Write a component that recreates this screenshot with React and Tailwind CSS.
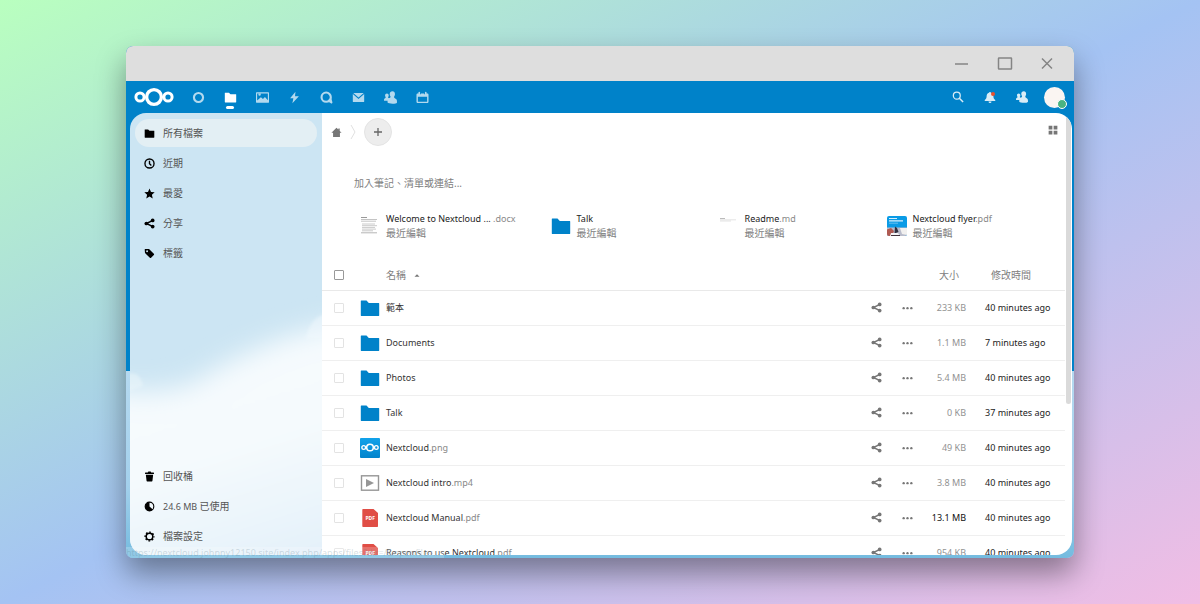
import React from "react";

const LogoIcon = ({ className }) => (
    <svg viewBox="0 0 40 20" className={className} fill="none" stroke="currentColor">
        <circle cx="20" cy="10" r="7.4" strokeWidth="3.4" />
        <circle cx="6" cy="10" r="4.1" strokeWidth="3" />
        <circle cx="34" cy="10" r="4.1" strokeWidth="3" />
    </svg>
);

// 16x16 glyphs, all painted with currentColor
const glyphs = {
    ring: <circle cx="8" cy="8" r="5.6" fill="none" stroke="currentColor" strokeWidth="2.6" />,
    folder: <path d="M1.5 2c-.3 0-.5.2-.5.5v11c0 .3.2.5.5.5h13c.3 0 .5-.2.5-.5v-9c0-.3-.2-.5-.5-.5H8L6 2z" />,
    image: (
        <path
            fillRule="evenodd"
            d="M.6 1.5a.6.6 0 0 0-.6.6v11.8c0 .3.3.6.6.6h14.8c.3 0 .6-.3.6-.6V2.1a.6.6 0 0 0-.6-.6zM1.4 3h13.2v8.4L11 7.4 8.6 9.8 6 7.6l-4.6 4zm3-.1a1.5 1.5 0 1 0 0 3 1.5 1.5 0 0 0 0-3z"
        />
    ),
    bolt: <path d="M9.2.8 2.6 9h4L5.4 15.2 13.4 6.6H8.6z" />,
    talk: (
        <g fill="none" stroke="currentColor" strokeWidth="2.6">
            <circle cx="7.6" cy="7.6" r="5.7" />
            <path d="M10 11.6 14 14 12.6 9.4" strokeLinejoin="round" />
        </g>
    ),
    mail: <path d="M1.6 2.4 8 8l6.4-5.6zM1 3.6v9.2c0 .5.4.8.8.8h12.4c.4 0 .8-.3.8-.8V3.6L8 9.9z" />,
    contacts: (
        <path d="M10.4.4C8.4.4 7 1.9 7 3.9c0 1.1.5 1.9.9 2.7.2.8 0 1.4-.4 1.8-.5.2-1 .4-1.5.6-.2-.1-.4-.2-.6-.3-.3-.3-.4-.7-.2-1.2.3-.5.6-1.1.6-1.9 0-1.4-.9-2.4-2.2-2.4S1.3 4.2 1.3 5.6c0 .8.4 1.4.6 1.9.2.5.1.9-.1 1.2-.9.4-1.5.8-1.7 1.5L0 12h4.5c-.2.9-.2 1.7-.1 2.3.8.8 3.2 1.5 6.1 1.5s4.9-.6 5.4-1.3c.2-1.4 0-3-.4-4-.7-.8-1.7-1.4-2.6-1.9-.5-.5-.6-1.1-.4-1.9.5-.8 1-1.7 1-2.8 0-2-1.1-3.5-3.1-3.5z" />
    ),
    calendar: (
        <path
            fillRule="evenodd"
            d="M4 .8c-.6 0-1 .4-1 1V3H2.2C1.2 3 .6 3.6.6 4.5v8.7c0 1 .7 1.7 1.7 1.7h11.4c1 0 1.7-.7 1.7-1.7V4.5c0-.9-.6-1.5-1.6-1.5H13V1.8c0-.6-.4-1-1-1s-1 .4-1 1V4H10V3H6v1H5V1.8c0-.6-.4-1-1-1zM2.3 7h11.4v6.2H2.3z"
        />
    ),
    search: (
        <g fill="none" stroke="currentColor">
            <circle cx="6.4" cy="6.2" r="4.6" strokeWidth="1.7" />
            <path d="M9.8 9.6 14.8 14.6" strokeWidth="2" />
        </g>
    ),
    bell: <path d="M8 1.2c-.8 0-1.3.5-1.4 1.2C4.5 3 3.6 4.7 3.5 7c-.1 2.4-.8 3.6-2.5 4.9v1.3h14v-1.3c-1.7-1.3-2.4-2.5-2.5-4.9-.1-2.3-1-4-3.1-4.6C9.3 1.7 8.8 1.2 8 1.2zM6 14a2 2 0 0 0 4 0z" />,
    clock: (
        <g fill="none" stroke="currentColor" strokeWidth="2">
            <circle cx="8" cy="8" r="6.6" />
            <path d="M8 4v4.3l2.7 2.5" />
        </g>
    ),
    star: <path d="M8 .8l2.2 5 5.3.5-4 3.6 1.2 5.3L8 12.4l-4.7 2.8 1.2-5.3-4-3.6 5.3-.5z" />,
    share: (
        <g>
            <path d="M13 3.5 3.5 8 13 12.5" fill="none" stroke="currentColor" strokeWidth="2.2" />
            <circle cx="12.6" cy="3.6" r="2.7" />
            <circle cx="3.4" cy="8" r="2.7" />
            <circle cx="12.6" cy="12.4" r="2.7" />
        </g>
    ),
    tag: (
        <path
            fillRule="evenodd"
            d="M1.6 1.6C1.2 1.6 1 1.9 1 2.3l.4 4.4c0 .4.2.7.4 1l6.7 6.6c.5.5 1.3.5 1.8 0l4-4c.5-.5.5-1.3 0-1.8L7.7 1.9c-.3-.2-.6-.4-1-.4zM4.5 3.2a1.4 1.4 0 1 1 0 2.8 1.4 1.4 0 0 1 0-2.8z"
        />
    ),
    trash: <path d="M6.3.8 5.5 2H2.2c-.4 0-.7.3-.7.7V4.2h13V2.7c0-.4-.3-.7-.7-.7h-3.3L9.7.8zM2.7 5.3l1 9c.1.5.4.8.9.8h6.8c.5 0 .8-.3.9-.8l1-9z" />,
    quota: (
        <g>
            <circle cx="8" cy="8" r="6.3" fill="none" stroke="currentColor" strokeWidth="1.6" />
            <path d="M8 8V1.5a6.5 6.5 0 1 0 4.9 11z" />
        </g>
    ),
    gear: (
        <g fill="none" stroke="currentColor">
            <circle cx="8" cy="8" r="4.8" strokeWidth="2.2" />
            <circle cx="8" cy="8" r="6.4" strokeWidth="2" strokeDasharray="2.5 2.526" strokeDashoffset="1.25" />
        </g>
    ),
    home: <path d="M8 1 .6 8.4H3V14.4h10V8.4h2.4L12.7 5.7V2.2h-2v1.5z" />,
    dots: (
        <g>
            <circle cx="2.4" cy="9" r="1.7" />
            <circle cx="8" cy="9" r="1.7" />
            <circle cx="13.6" cy="9" r="1.7" />
        </g>
    ),
    grid: <path d="M1 1h6v6H1zM9 1h6v6H9zM1 9h6v6H1zM9 9h6v6H9z" />,
};

const Glyph = ({ name, className = "size-3" }) => (
    <svg viewBox="0 0 16 16" className={className} fill="currentColor" aria-hidden="true">
        {glyphs[name]}
    </svg>
);

const FolderIcon = () => (
    <svg viewBox="0 0 20 20" className="size-5" fill="#0082c9">
        <path d="M1.3 2.5h5.2L8.8 4.9h9.9c.3 0 .5.2.5.5v12.1c0 .3-.2.5-.5.5H1.3c-.3 0-.5-.2-.5-.5V3c0-.3.2-.5.5-.5z" />
    </svg>
);

const LogoThumb = () => (
    <div className="size-5 flex flex-col items-center justify-center rounded-[1px] bg-linear-to-b from-[#12a2ea] to-[#0384cc] text-white">
        <LogoIcon className="w-[18px] h-[9px]" />
    </div>
);

const VideoIcon = () => (
    <svg viewBox="0 0 20 20" className="size-5">
        <rect x="1.5" y="2.8" width="17" height="14.4" fill="#fff" stroke="#969696" strokeWidth="1.4" />
        <path d="M6 6v8l8-4z" fill="#969696" />
    </svg>
);

const PdfIcon = () => (
    <svg viewBox="0 0 20 20" className="size-5">
        <path d="M3 1h10.5L18 5v13.3c0 .4-.3.7-.7.7H3c-.4 0-.7-.3-.7-.7V1.7C2.3 1.3 2.6 1 3 1z" fill="#e04e46" />
        <text x="10.2" y="12" textAnchor="middle" fontSize="5" fontWeight="700" fill="#fff">
            PDF
        </text>
    </svg>
);

const DocThumb = () => (
    <svg viewBox="0 0 20 20" className="size-5" stroke="#c4c4c4" strokeWidth="1">
        <path d="M1 1.5h6" stroke="#999" />
        <path d="M1 3.5h16M1 5.2h15" />
        <path d="M2 8h13M2 9.7h15M2 11.4h13M2 13.1h14M2 14.8h11" stroke="#cacaca" />
        <path d="M1 16.8h16" stroke="#b5b5b5" />
    </svg>
);

const ReadmeThumb = () => (
    <svg viewBox="0 0 20 20" className="size-5" strokeWidth="0.8">
        <path d="M1 2.5h5" stroke="#aaa" />
        <path d="M1 3.8h16M1 5h11" stroke="#dcdcdc" />
    </svg>
);

const FlyerThumb = () => (
    <svg viewBox="0 0 20 20" className="size-5">
        <clipPath id="flyer">
            <rect width="20" height="20" rx="2" />
        </clipPath>
        <g clipPath="url(#flyer)">
            <rect width="20" height="20" fill="#0a9be6" />
            <path d="M0 11.500h20V20H0z" fill="#b9bccb" />
            <path d="M0 13.500 4 12l3 3-2 5H0z" fill="#b05a52" />
            <path d="M8 10.500 10 12l1.500 4-4 1.500z" fill="#30303f" />
            <path d="M4 17h7l2 3H3z" fill="#f4f4f6" />
            <path d="M13 12h7v7l-5-1z" fill="#f1f0ef" />
            <path d="M4 19h9v1H4z" fill="#40303a" />
            <path d="M2 2.500h8M2 4.800h14" stroke="#d6effc" strokeWidth="1.2" />
            <path d="M2 7.200h9" stroke="#7cc9f2" strokeWidth="0.8" />
        </g>
    </svg>
);

const apps = [
    { icon: "ring", label: "Dashboard" },
    { icon: "folder", label: "Files", active: true },
    { icon: "image", label: "Photos" },
    { icon: "bolt", label: "Activity" },
    { icon: "talk", label: "Talk" },
    { icon: "mail", label: "Mail" },
    { icon: "contacts", label: "Contacts" },
    { icon: "calendar", label: "Calendar" },
];

const navItems = [
    { icon: "folder", label: "所有檔案", active: true },
    { icon: "clock", label: "近期" },
    { icon: "star", label: "最愛" },
    { icon: "share", label: "分享" },
    { icon: "tag", label: "標籤" },
];

const footerItems = [
    { icon: "trash", label: "回收桶" },
    { icon: "quota", amount: "24.6 MB ", label: "已使用" },
    { icon: "gear", label: "檔案設定" },
];

const recent = [
    { name: "Welcome to Nextcloud ... ", ext: ".docx", icon: <DocThumb /> },
    { name: "Talk", icon: <FolderIcon /> },
    { name: "Readme", ext: ".md", icon: <ReadmeThumb /> },
    { name: "Nextcloud flyer", ext: ".pdf", icon: <FlyerThumb /> },
];

const files = [
    { name: "範本", icon: <FolderIcon />, size: "233 KB", time: "40 minutes ago" },
    { name: "Documents", icon: <FolderIcon />, size: "1.1 MB", time: "7 minutes ago" },
    { name: "Photos", icon: <FolderIcon />, size: "5.4 MB", time: "40 minutes ago" },
    { name: "Talk", icon: <FolderIcon />, size: "0 KB", time: "37 minutes ago" },
    { name: "Nextcloud", ext: ".png", icon: <LogoThumb />, size: "49 KB", time: "40 minutes ago" },
    { name: "Nextcloud intro", ext: ".mp4", icon: <VideoIcon />, size: "3.8 MB", time: "40 minutes ago" },
    { name: "Nextcloud Manual", ext: ".pdf", icon: <PdfIcon />, size: "13.1 MB", time: "40 minutes ago", large: true },
    { name: "Reasons to use Nextcloud", ext: ".pdf", icon: <PdfIcon />, size: "954 KB", time: "40 minutes ago" },
];

function TitleBar() {
    return (
        <div className="h-[35px] shrink-0 flex items-center justify-end gap-6 pr-[18px] bg-[#dedede] text-[#858585]">
            <button type="button" aria-label="Minimize">
                <svg viewBox="0 0 18 18" className="size-[18px]" fill="none" stroke="currentColor" strokeWidth="1.5">
                    <path d="M1 9h13" />
                </svg>
            </button>
            <button type="button" aria-label="Maximize">
                <svg viewBox="0 0 18 18" className="size-[18px]" fill="none" stroke="currentColor" strokeWidth="1.5">
                    <rect x="2.5" y="3" width="13" height="11" rx="0.5" />
                </svg>
            </button>
            <button type="button" aria-label="Close">
                <svg viewBox="0 0 18 18" className="size-[18px]" fill="none" stroke="currentColor" strokeWidth="1.5">
                    <path d="M4 3.500l10 10M14 3.500 4 13.500" />
                </svg>
            </button>
        </div>
    );
}

function Header() {
    return (
        <header className="h-8 shrink-0 flex items-center justify-between pl-2 pr-1 text-white">
            <div className="flex items-center">
                <a href="#home" aria-label="Nextcloud" className="mr-2">
                    <LogoIcon className="w-10 h-5" />
                </a>
                <nav className="flex">
                    {apps.map((app) => (
                        <a
                            key={app.label}
                            href={`#${app.icon}`}
                            aria-label={app.label}
                            className={`relative size-8 flex items-center justify-center ${app.active ? "" : "opacity-70"}`}
                        >
                            <Glyph name={app.icon} className="size-[13px]" />
                            {app.active && (
                                <span className="absolute bottom-1 left-3 w-2 h-[3px] rounded-full bg-white" />
                            )}
                        </a>
                    ))}
                </nav>
            </div>
            <div className="flex items-center">
                <button type="button" aria-label="Search" className="size-8 flex items-center justify-center opacity-85">
                    <Glyph name="search" />
                </button>
                <button type="button" aria-label="Notifications" className="relative size-8 flex items-center justify-center">
                    <Glyph name="bell" className="size-3 opacity-85" />
                    <span className="absolute top-[11px] right-[11px] size-1 rounded-full bg-[#e9502c]" />
                </button>
                <button type="button" aria-label="Contacts" className="size-8 flex items-center justify-center opacity-85">
                    <Glyph name="contacts" />
                </button>
                <button type="button" aria-label="Account" className="relative size-8 flex items-center justify-center">
                    <span className="size-[21px] rounded-full bg-[#faf5f2]" />
                    <span className="absolute right-[3px] bottom-1 size-[10px] rounded-full bg-[#49b382] border border-white" />
                </button>
            </div>
        </header>
    );
}

function NavLink({ item }) {
    return (
        <li>
            <a
                href={`#${item.icon}`}
                className={`h-7 flex items-center gap-2 px-[9px] rounded-full text-[10px] text-[#555] ${item.active ? "bg-[#e3eff4]" : ""}`}
            >
                <Glyph name={item.icon} className="size-[11px] text-black" />
                <span>
                    {item.amount && <span className="text-[9px]">{item.amount}</span>}
                    {item.label}
                </span>
            </a>
        </li>
    );
}

function Sidebar() {
    return (
        <aside className="relative w-48 shrink-0 overflow-hidden bg-[#cce5f3]">
            {/* clouds */}
            <svg
                viewBox="0 0 192 442"
                preserveAspectRatio="none"
                className="absolute inset-0 w-full h-full"
                aria-hidden="true"
            >
                <defs>
                    <filter id="soft" x="-20%" y="-20%" width="140%" height="140%">
                        <feGaussianBlur stdDeviation="13" />
                    </filter>
                    <filter id="edge">
                        <feGaussianBlur stdDeviation="1.5" />
                    </filter>
                    <linearGradient id="cloud" x1="0" y1="0" x2="0.3" y2="1">
                        <stop offset="0" stopColor="#f6fbfe" />
                        <stop offset="0.55" stopColor="#f5fafd" />
                        <stop offset="1" stopColor="#e2f0f9" />
                    </linearGradient>
                </defs>
                <path
                    d="M-40 272Q30 286 66 268Q100 246 140 230Q180 214 240 206V500H-40z"
                    fill="url(#cloud)"
                    filter="url(#soft)"
                />
                <path d="M176 226q4-22 20-25v25z" fill="#f2f9fd" fillOpacity="0.5" filter="url(#edge)" />
                <path d="M-4 261q14-4 17 12l-17 6z" fill="#eef7fc" fillOpacity="0.5" filter="url(#edge)" />
            </svg>
            <nav className="relative h-full px-[5px] pt-[6px] pb-[5px] flex flex-col justify-between">
                <ul className="space-y-[2px]">
                    {navItems.map((item) => (
                        <NavLink key={item.label} item={item} />
                    ))}
                </ul>
                <ul className="space-y-[2px]">
                    {footerItems.map((item) => (
                        <NavLink key={item.label} item={item} />
                    ))}
                </ul>
            </nav>
        </aside>
    );
}

function FileRow({ file }) {
    return (
        <tr className="h-[35px] border-b border-[#efefef]">
            <td className="w-[34px]">
                <input
                    type="checkbox"
                    aria-label={file.name}
                    className="block mx-auto size-[10px] appearance-none border border-[#e3e3e3] rounded-[1px]"
                />
            </td>
            <td className="pl-1">
                <a href={`#${file.name}`} className="flex items-center gap-[6px] text-[#333]">
                    {file.icon}
                    <span>
                        {file.name}
                        <span className="text-[#888]">{file.ext}</span>
                    </span>
                </a>
            </td>
            <td className="w-[31px]">
                <button type="button" aria-label="Share" className="block mx-auto text-[#767676]">
                    <Glyph name="share" className="size-[11px]" />
                </button>
            </td>
            <td className="w-[31px]">
                <button type="button" aria-label="More" className="block mx-auto text-[#767676]">
                    <Glyph name="dots" className="size-[11px]" />
                </button>
            </td>
            <td className={`w-[43px] text-right whitespace-nowrap ${file.large ? "text-[#111]" : "text-[#929292]"}`}>
                {file.size}
            </td>
            <td className="w-[99px] pl-[19px] whitespace-nowrap text-[#222]">{file.time}</td>
        </tr>
    );
}

function FileList() {
    return (
        <main className="relative flex-1 min-w-0 overflow-hidden bg-white">
            <div className="pr-[7px]">
                <div className="h-[38px] flex items-center justify-between pl-[9px] pr-[7px]">
                    <div className="flex items-center text-[#777]">
                        <a href="#files" aria-label="Home">
                            <Glyph name="home" className="size-[11px]" />
                        </a>
                        <svg viewBox="0 0 6 16" className="w-[6px] h-4 ml-2" fill="none" stroke="#e0e0e0">
                            <path d="M1 1l4 7-4 7" />
                        </svg>
                        <button
                            type="button"
                            aria-label="New"
                            className="size-7 ml-2 flex items-center justify-center rounded-full bg-[#ededed] border border-[#e4e4e4]"
                        >
                            <svg viewBox="0 0 10 10" className="size-[10px]" stroke="#666" strokeWidth="1.3">
                                <path d="M5 1v8M1 5h8" />
                            </svg>
                        </button>
                    </div>
                    <button type="button" aria-label="Grid view" className="mb-1 text-[#767676]">
                        <Glyph name="grid" className="size-[10px]" />
                    </button>
                </div>

                <p className="mt-6 pl-8 text-[10px] leading-4 text-[#808080]">加入筆記、清單或連結...</p>

                <div className="mt-[21px] pl-[38px] flex gap-[35px]">
                    {recent.map((item) => (
                        <a key={item.name} href="#recent" className="min-w-[133px] flex items-center gap-[6px]">
                            {item.icon}
                            <span className="leading-[14px] whitespace-nowrap">
                                <span className="block text-[#222]">
                                    {item.name}
                                    <span className="text-[#888]">{item.ext}</span>
                                </span>
                                <span className="block text-[10px] text-[#808080]">最近編輯</span>
                            </span>
                        </a>
                    ))}
                </div>

                <table className="mt-5 w-full border-collapse">
                    <thead>
                        <tr className="h-[30px] border-b border-[#e9e9e9] text-left text-[10px] text-[#808080]">
                            <th>
                                <input
                                    type="checkbox"
                                    aria-label="Select all"
                                    className="block mx-auto size-[10px] appearance-none border border-[#999] rounded-[1px]"
                                />
                            </th>
                            <th className="pl-[30px] font-normal">
                                <button type="button" className="flex items-center gap-2">
                                    名稱
                                    <svg viewBox="0 0 6 4" className="w-[6px] h-1" fill="#777">
                                        <path d="M.5 3.800 3 1.200l2.500 2.600z" />
                                    </svg>
                                </button>
                            </th>
                            <th />
                            <th />
                            <th className="pr-[7px] text-right font-normal">大小</th>
                            <th className="pl-[25px] font-normal">修改時間</th>
                        </tr>
                    </thead>
                    <tbody>
                        {files.map((file) => (
                            <FileRow key={file.name} file={file} />
                        ))}
                    </tbody>
                </table>
            </div>
            <div className="absolute top-0 right-[1px] w-[5px] h-[291px] rounded-b-full bg-[#dadada]" />
        </main>
    );
}

export default function App() {
    return (
        <div className="h-screen px-[126px] py-[46px] bg-linear-to-br/srgb from-[#b9ffbf] via-[#a4c3f3] to-[#f1bde4] font-['Noto_Sans','Noto_Sans_CJK_TC',sans-serif] text-[9px] leading-4">
            <div className="relative h-full flex flex-col rounded-[7px] overflow-hidden bg-[linear-gradient(#0082c9_325px,#b5d9f0_325px,#a3d0ec_440px,#74bbdf)] shadow-[0_15px_30px_rgba(0,0,0,0.4)]">
                <TitleBar />
                <Header />
                <div className="flex-1 min-h-0 flex ml-1 mr-[2px] mb-[3px] rounded-2xl overflow-hidden">
                    <Sidebar />
                    <FileList />
                </div>
                <div className="absolute left-0 bottom-0 h-[11px] pr-1 flex items-center rounded-tr bg-white/20 text-[#5a7a8a]/25">
                    https://nextcloud.johnny12150.site/index.php/apps/files?dir=/&openfile=...
                </div>
            </div>
        </div>
    );
}
